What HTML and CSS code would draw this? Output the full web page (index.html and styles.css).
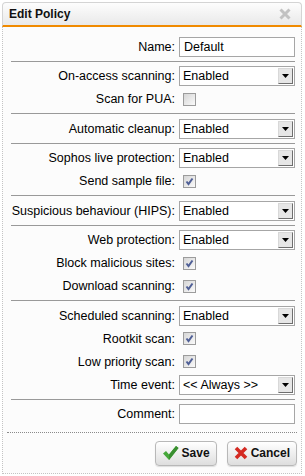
FILE: index.html
```html
<!DOCTYPE html>
<html lang="en">
<head>
    <meta charset="UTF-8">
    <meta name="viewport" content="width=device-width, initial-scale=1.0">
    <title>Edit Policy</title>
    <link rel="stylesheet" href="styles.css">
</head>
<body>
    <div class="dialog">
        <div class="dialog-header">
            <span class="dialog-title">Edit Policy</span>
            <span class="dialog-close">
                <svg width="12" height="12" viewBox="0 0 12 12"><path d="M1.5 1.5 L10.5 10.5 M10.5 1.5 L1.5 10.5" stroke="#c2c2c2" stroke-width="3"/></svg>
            </span>
        </div>
        <div class="dialog-content">
            <div class="form">
                <div class="section">
                    <div class="row">
                        <label>Name:</label>
                        <div class="text-field">Default</div>
                    </div>
                </div>

                <div class="section">
                    <div class="row">
                        <label>On-access scanning:</label>
                        <div class="select"><span>Enabled</span><span class="select-arrow"><svg width="7" height="4" viewBox="0 0 7 4"><path d="M0 0 H7 L3.5 4 Z" fill="#000"/></svg></span></div>
                    </div>
                    <div class="row">
                        <label>Scan for PUA:</label>
                        <div><span class="checkbox"></span></div>
                    </div>
                </div>

                <div class="section">
                    <div class="row">
                        <label>Automatic cleanup:</label>
                        <div class="select"><span>Enabled</span><span class="select-arrow"><svg width="7" height="4" viewBox="0 0 7 4"><path d="M0 0 H7 L3.5 4 Z" fill="#000"/></svg></span></div>
                    </div>
                </div>

                <div class="section">
                    <div class="row">
                        <label>Sophos live protection:</label>
                        <div class="select"><span>Enabled</span><span class="select-arrow"><svg width="7" height="4" viewBox="0 0 7 4"><path d="M0 0 H7 L3.5 4 Z" fill="#000"/></svg></span></div>
                    </div>
                    <div class="row">
                        <label>Send sample file:</label>
                        <div><span class="checkbox checked"><svg width="11" height="11" viewBox="0 0 11 11"><path d="M2.5 5.5 L4.5 8 L8.5 2.5" fill="none" stroke="#4f5f96" stroke-width="2"/></svg></span></div>
                    </div>
                </div>

                <div class="section">
                    <div class="row">
                        <label>Suspicious behaviour (HIPS):</label>
                        <div class="select"><span>Enabled</span><span class="select-arrow"><svg width="7" height="4" viewBox="0 0 7 4"><path d="M0 0 H7 L3.5 4 Z" fill="#000"/></svg></span></div>
                    </div>
                </div>

                <div class="section">
                    <div class="row">
                        <label>Web protection:</label>
                        <div class="select"><span>Enabled</span><span class="select-arrow"><svg width="7" height="4" viewBox="0 0 7 4"><path d="M0 0 H7 L3.5 4 Z" fill="#000"/></svg></span></div>
                    </div>
                    <div class="row">
                        <label>Block malicious sites:</label>
                        <div><span class="checkbox checked"><svg width="11" height="11" viewBox="0 0 11 11"><path d="M2.5 5.5 L4.5 8 L8.5 2.5" fill="none" stroke="#4f5f96" stroke-width="2"/></svg></span></div>
                    </div>
                    <div class="row">
                        <label>Download scanning:</label>
                        <div><span class="checkbox checked"><svg width="11" height="11" viewBox="0 0 11 11"><path d="M2.5 5.5 L4.5 8 L8.5 2.5" fill="none" stroke="#4f5f96" stroke-width="2"/></svg></span></div>
                    </div>
                </div>

                <div class="section">
                    <div class="row">
                        <label>Scheduled scanning:</label>
                        <div class="select"><span>Enabled</span><span class="select-arrow"><svg width="7" height="4" viewBox="0 0 7 4"><path d="M0 0 H7 L3.5 4 Z" fill="#000"/></svg></span></div>
                    </div>
                    <div class="row">
                        <label>Rootkit scan:</label>
                        <div><span class="checkbox checked"><svg width="11" height="11" viewBox="0 0 11 11"><path d="M2.5 5.5 L4.5 8 L8.5 2.5" fill="none" stroke="#4f5f96" stroke-width="2"/></svg></span></div>
                    </div>
                    <div class="row">
                        <label>Low priority scan:</label>
                        <div><span class="checkbox checked"><svg width="11" height="11" viewBox="0 0 11 11"><path d="M2.5 5.5 L4.5 8 L8.5 2.5" fill="none" stroke="#4f5f96" stroke-width="2"/></svg></span></div>
                    </div>
                    <div class="row">
                        <label>Time event:</label>
                        <div class="select"><span>&lt;&lt; Always &gt;&gt;</span><span class="select-arrow"><svg width="7" height="4" viewBox="0 0 7 4"><path d="M0 0 H7 L3.5 4 Z" fill="#000"/></svg></span></div>
                    </div>
                </div>

                <div class="section last">
                    <div class="row">
                        <label>Comment:</label>
                        <div class="text-field"></div>
                    </div>
                </div>
            </div>

            <div class="dialog-footer">
                <button class="btn">
                    <svg width="17" height="16" viewBox="0 0 17 16"><path d="M1 8.5 L4 6 L7 9.5 L14 1 L16.5 3 L7 15 Z" fill="#46a83a"/><path d="M7 9.5 L14 1 L16.5 3 L7 15 Z" fill="#3a8f30"/></svg>
                    Save
                </button>
                <button class="btn">
                    <svg width="14" height="14" viewBox="0 0 14 14"><path d="M2 2 L12 12 M12 2 L2 12" stroke="#d42a22" stroke-width="3.6"/></svg>
                    Cancel
                </button>
            </div>
        </div>
    </div>
</body>
</html>
```

FILE: styles.css
```css
body {
    margin: 0;
    padding: 2px;
    background-color: #fff;
    font-family: 'Liberation Sans', Arial, sans-serif;
    font-size: 12.5px;
    color: #000;
}
.dialog {
    width: 300px;
    box-sizing: border-box;
}
.dialog-header {
    height: 22px;
    display: flex;
    align-items: center;
    justify-content: space-between;
    padding: 0 10px 0 6px;
    background: linear-gradient(#fdfdfd, #e9e9e9);
    border: 1px solid #d4d4d4;
    border-bottom: 2px solid #f08a00;
    border-radius: 4px 4px 0 0;
}
.dialog-title {
    font-weight: bold;
    font-size: 12px;
    color: #111;
}
.dialog-close {
    display: flex;
}
.dialog-content {
    background-color: #fcfcfc;
    border: 1px dotted #c4c4c4;
    border-top: none;
}
.form {
    padding: 5px 6px 0 8px;
}
.section {
    padding: 3px 0 2.5px;
    border-bottom: 1px solid #999;
}
.section.last {
    border-bottom: none;
    padding-bottom: 6px;
}
.row {
    display: grid;
    grid-template-columns: 1fr 116px;
    column-gap: 4px;
    align-items: center;
    height: 23px;
}
.row label {
    text-align: right;
    white-space: nowrap;
}
.text-field {
    height: 20px;
    box-sizing: border-box;
    border: 1px solid #a6a6a6;
    background-color: #fff;
    padding: 0 4px;
    line-height: 18px;
}
.select {
    height: 20px;
    box-sizing: border-box;
    border: 1px solid #a6a6a6;
    background-color: #fff;
    display: flex;
    align-items: center;
    justify-content: space-between;
    padding: 0 1px 0 3px;
}
.select-arrow {
    width: 15px;
    height: 16px;
    box-sizing: border-box;
    display: flex;
    align-items: center;
    justify-content: center;
    background-color: #e6e6e6;
    border: 1px solid;
    border-color: #d8d8d8 #6e6e6e #6e6e6e #d8d8d8;
}
.checkbox {
    display: flex;
    align-items: center;
    justify-content: center;
    width: 13px;
    height: 13px;
    box-sizing: border-box;
    margin-left: 4px;
    border: 1px solid #9c9c9c;
    background: linear-gradient(135deg, #d6d6d6, #fafafa);
}
.dialog-footer {
    margin: 0 4px;
    padding: 8px 0 7px;
    border-top: 1px dotted #8a8a8a;
    display: flex;
    justify-content: flex-end;
    gap: 10px;
}
.btn {
    height: 25px;
    display: flex;
    align-items: center;
    gap: 3px;
    padding: 0 6px;
    font-family: 'Liberation Sans', Arial, sans-serif;
    font-size: 12px;
    font-weight: bold;
    color: #111;
    background: linear-gradient(#ffffff, #dedede);
    border: 1px solid #b8b8b8;
    border-radius: 4px;
    box-shadow: 0 1px 1px rgba(0, 0, 0, 0.12);
}
```
